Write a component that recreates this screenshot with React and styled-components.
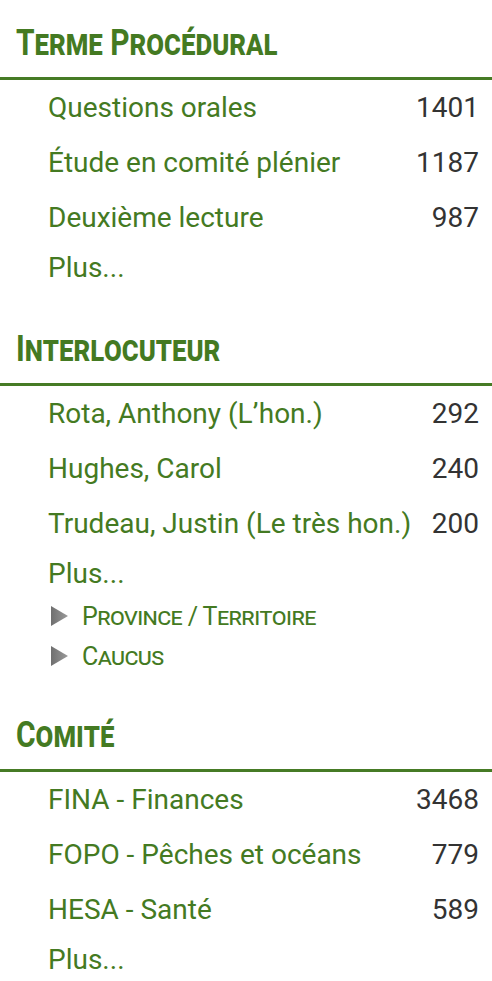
import React from "react";
import styled, { createGlobalStyle } from "styled-components";

const GlobalStyle = createGlobalStyle`
  body {
    margin: 0;
    background: #fff;
    font-family: Roboto, "Liberation Sans", sans-serif;
  }
`;

const sections = [
  {
    title: "Terme Procédural",
    items: [
      { label: "Questions orales", count: 1401 },
      { label: "Étude en comité plénier", count: 1187 },
      { label: "Deuxième lecture", count: 987 },
    ],
  },
  {
    title: "Interlocuteur",
    items: [
      { label: "Rota, Anthony (L’hon.)", count: 292 },
      { label: "Hughes, Carol", count: 240 },
      { label: "Trudeau, Justin (Le très hon.)", count: 200 },
    ],
    subs: ["Province / Territoire", "Caucus"],
  },
  {
    title: "Comité",
    items: [
      { label: "FINA - Finances", count: 3468 },
      { label: "FOPO - Pêches et océans", count: 779 },
      { label: "HESA - Santé", count: 589 },
    ],
  },
];

function Facets() {
  return (
    <Wrapper>
      {sections.map((section) => (
        <Section key={section.title}>
          <Heading>
            <HeadingText>{section.title}</HeadingText>
          </Heading>
          <List>
            {section.items.map((item) => (
              <Row key={item.label}>
                <Label href="#">{item.label}</Label>
                <Count>{item.count}</Count>
              </Row>
            ))}
            <MoreRow>
              <Label href="#">Plus...</Label>
            </MoreRow>
            {section.subs &&
              section.subs.map((sub) => (
                <SubRow key={sub}>
                  <Arrow />
                  <SubLabel href="#">{sub}</SubLabel>
                </SubRow>
              ))}
          </List>
        </Section>
      ))}
    </Wrapper>
  );
}

export default function App() {
  return (
    <>
      <GlobalStyle />
      <Facets />
    </>
  );
}

const Wrapper = styled.div`
  display: flex;
  flex-direction: column;
  gap: 16px;
`;

const Section = styled.section`
  display: flex;
  flex-direction: column;
`;

const Heading = styled.h2`
  margin: 0;
  padding: 18px 16px 9px;
  line-height: 50px;
  font-size: 37px;
  font-weight: 700;
  font-variant: small-caps;
  color: #447a22;
  border-bottom: 3px solid #467b25;
  white-space: nowrap;
`;

/* narrow the bold small caps to look like the condensed face */
const HeadingText = styled.span`
  display: inline-block;
  transform: scaleX(0.81);
  transform-origin: left center;
`;

const List = styled.ul`
  margin: 0;
  padding: 0 13px 0 48px;
  list-style: none;
`;

const Row = styled.li`
  display: flex;
  justify-content: space-between;
  align-items: center;
  height: 55px;
  font-size: 28px;
`;

const MoreRow = styled(Row)`
  height: 45px;
`;

const Label = styled.a`
  color: #447a22;
  text-decoration: none;
`;

const Count = styled.span`
  color: #333;
`;

const SubRow = styled.li`
  display: flex;
  align-items: center;
  gap: 14px;
  height: 40px;
  padding-left: 3px;
`;

const Arrow = styled.span`
  width: 17px;
  height: 20px;
  background: linear-gradient(90deg, #6f6f6f, #9a9a9a);
  clip-path: polygon(0 0, 100% 50%, 0 100%);
`;

const SubLabel = styled.a`
  color: #447a22;
  text-decoration: none;
  font-size: 25px;
  letter-spacing: -0.6px;
  font-variant: small-caps;
`;
